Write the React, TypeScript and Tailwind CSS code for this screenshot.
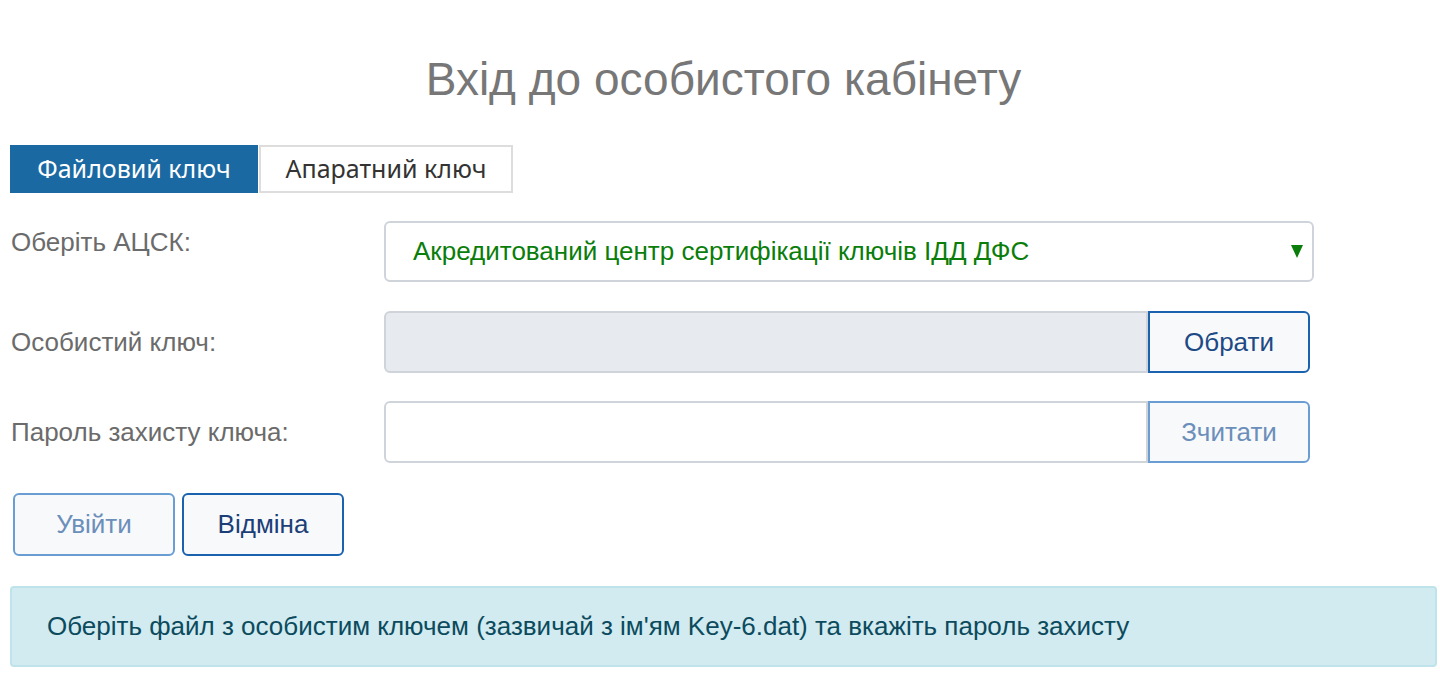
import React, { useState } from "react";

const arial = { fontFamily: '"Liberation Sans", Arial, sans-serif' };

const App: React.FC = () => {
  const [tab, setTab] = useState<"file" | "hw">("file");

  return (
    <div
      className="min-h-[700px] w-full bg-white pl-[10px] pr-[3px] text-[26px]"
      style={arial}
    >
      <h1 className="pt-[56px] text-center text-[46px] leading-none text-[#777]">
        Вхід до особистого кабінету
      </h1>

      <div
        className="mt-[43px] flex"
        style={{ fontFamily: '"Noto Sans", "Open Sans", sans-serif' }}
      >
        <button
          onClick={() => setTab("file")}
          className={`h-[48px] w-[248px] text-[25px] ${
            tab === "file"
              ? "bg-[#1b69a3] text-white"
              : "border-2 border-[#ddd] bg-white text-[#333]"
          }`}
        >
          Файловий ключ
        </button>
        <button
          onClick={() => setTab("hw")}
          className={`ml-px h-[48px] w-[254px] text-[25px] ${
            tab === "hw"
              ? "bg-[#1b69a3] text-white"
              : "border-2 border-[#ddd] bg-white text-[#333]"
          }`}
        >
          Апаратний ключ
        </button>
      </div>

      <div className="mt-[28px] flex items-start">
        <label className="w-[374px] pl-px pt-[7px] leading-[28px] text-[#6b6b6b]">
          Оберіть АЦСК:
        </label>
        <div className="flex h-[61px] w-[930px] items-center justify-between rounded-[6px] border-2 border-[#ced4da] bg-white pl-[27px] pr-[9px]">
          <span className="text-[#0a7d0a]">
            Акредитований центр сертифікації ключів ІДД ДФС
          </span>
          <svg width="12" height="13" viewBox="0 0 12 13">
            <path d="M0 0 H12 L6 13 Z" fill="#0a7d0a" />
          </svg>
        </div>
      </div>

      <div className="mt-[29px] flex items-center">
        <label className="w-[374px] pl-px text-[#6b6b6b]">Особистий ключ:</label>
        <div className="flex">
          <div className="h-[62px] w-[764px] rounded-l-[6px] border-2 border-[#ced4da] bg-[#e7eaee]" />
          <button className="h-[62px] w-[162px] rounded-r-[6px] border-2 border-[#1a62ae] bg-[#f8f9fb] text-[#1d4a85]">
            Обрати
          </button>
        </div>
      </div>

      <div className="mt-[28px] flex items-center">
        <label className="w-[374px] pl-px text-[#6b6b6b]">
          Пароль захисту ключа:
        </label>
        <div className="flex">
          <input
            type="password"
            className="h-[62px] w-[764px] rounded-l-[6px] border-2 border-[#ced4da] bg-white px-3 outline-none"
          />
          <button className="h-[62px] w-[162px] rounded-r-[6px] border-2 border-[#6a9ed3] bg-[#f8f9fb] text-[#6b8fba]">
            Зчитати
          </button>
        </div>
      </div>

      <div className="mt-[30px] flex gap-[7px] pl-[3px]">
        <button className="h-[63px] w-[162px] rounded-[6px] border-2 border-[#6a9ed3] bg-[#f8f9fb] text-[#6b8fba]">
          Увійти
        </button>
        <button className="h-[63px] w-[162px] rounded-[6px] border-2 border-[#1a62ae] bg-[#f8f9fb] text-[#1d3f78]">
          Відміна
        </button>
      </div>

      <div className="mt-[30px] flex h-[81px] items-center rounded-[4px] border-2 border-[#bfe3ea] bg-[#d1ebf0] pl-[35px] text-[#0c4a5e]">
        Оберіть файл з особистим ключем (зазвичай з ім'ям Key-6.dat) та
        вкажіть пароль захисту
      </div>
    </div>
  );
};

export default App;
